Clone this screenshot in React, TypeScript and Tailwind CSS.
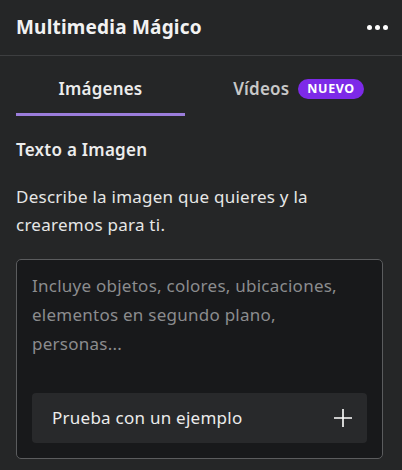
import { useState } from 'react';

// Panel lateral: generación de imágenes/vídeos a partir de texto
function Tabs({ active, onChange }: { active: 'img' | 'vid'; onChange: (t: 'img' | 'vid') => void }) {
  return (
    <div className="flex justify-between pl-4 pr-[19px]">
      <button
        type="button"
        onClick={() => onChange('img')}
        className="flex w-[169px] flex-col items-center pt-[21px]"
      >
        <span
          className={`text-[17px] font-semibold leading-[24px] tracking-[0.2px] ${active === 'img' ? 'text-[#ececec]' : 'text-[#c8c8c8]'}`}
        >
          Imágenes
        </span>
        <span className={`mt-[12px] h-[3px] w-full ${active === 'img' ? 'bg-[#9b7ddb]' : 'bg-transparent'}`} />
      </button>
      <button
        type="button"
        onClick={() => onChange('vid')}
        className="flex w-[169px] flex-col items-center pt-[21px]"
      >
        <span className="flex h-[24px] items-center gap-[9px]">
          <span
            className={`text-[17px] font-semibold leading-[24px] tracking-[0.2px] ${active === 'vid' ? 'text-[#ececec]' : 'text-[#c8c8c8]'}`}
          >
            Vídeos
          </span>
          <span className="flex h-[20px] items-center rounded-full bg-[#7d2ae8] px-[9px] text-[12.5px] font-bold tracking-[0.6px] text-white">
            NUEVO
          </span>
        </span>
        <span className={`mt-[12px] h-[3px] w-full ${active === 'vid' ? 'bg-[#9b7ddb]' : 'bg-transparent'}`} />
      </button>
    </div>
  );
}

export default function App() {
  const [tab, setTab] = useState<'img' | 'vid'>('img');
  const [prompt, setPrompt] = useState('');

  return (
    <div className="h-[470px] w-[402px] overflow-hidden bg-[#252627] text-[#ececec] [font-family:'Noto_Sans',sans-serif]">
      {/* Cabecera */}
      <header className="flex h-[56px] items-center justify-between border-b border-[#3d3e40] pl-4 pr-[9px]">
        <h1 className="text-[19px] font-bold tracking-[0.2px] text-[#f2f2f2]">Multimedia Mágico</h1>
        <button type="button" className="flex h-8 w-8 items-center justify-center gap-[3px]">
          <span className="h-[5px] w-[5px] rounded-full bg-white" />
          <span className="h-[5px] w-[5px] rounded-full bg-white" />
          <span className="h-[5px] w-[5px] rounded-full bg-white" />
        </button>
      </header>

      <Tabs active={tab} onChange={setTab} />

      <section className="pl-4 pr-[19px] pt-[22px] text-[17px] tracking-[0.25px]">
        <h2 className="font-semibold leading-[24px]">Texto a Imagen</h2>
        <p className="mt-[21px] leading-[28px] text-[#e6e6e6]">
          Describe la imagen que quieres y la crearemos para ti.
        </p>

        <div className="mt-[20px] flex h-[200px] flex-col rounded-[5px] border border-[#5b5c5e] bg-[#18191b] px-[15px] pb-[15px] pt-[11px]">
          <textarea
            value={prompt}
            onChange={(e) => setPrompt(e.target.value)}
            placeholder="Incluye objetos, colores, ubicaciones, elementos en segundo plano, personas..."
            className="flex-1 resize-none bg-transparent pr-[8px] leading-[29px] text-[#e6e6e6] outline-none placeholder:text-[#8b8c8e]"
          />
          <button
            type="button"
            className="flex h-[50px] items-center justify-between rounded-[4px] bg-[#28292b] pl-[20px] pr-[14px] text-left"
          >
            <span className="text-[#ececec]">Prueba con un ejemplo</span>
            <svg width="20" height="20" viewBox="0 0 20 20" fill="none" stroke="white" strokeWidth="1.6">
              <path d="M10 1v18M1 10h18" />
            </svg>
          </button>
        </div>
      </section>
    </div>
  );
}
